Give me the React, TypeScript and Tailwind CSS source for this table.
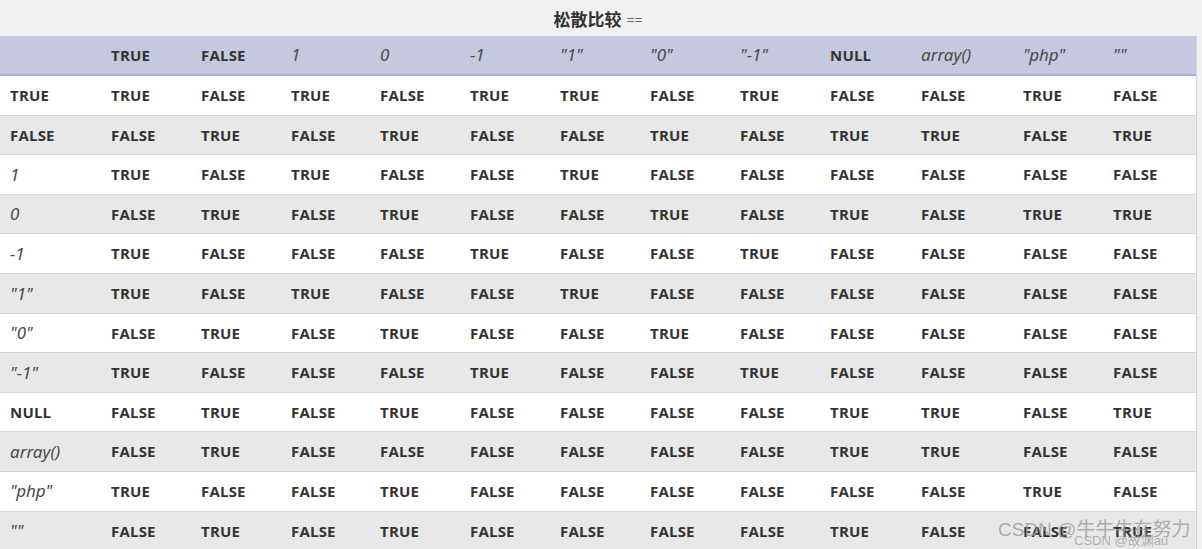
import React from 'react';

type Label = { text: string; italic: boolean };

const LABELS: Label[] = [
  { text: 'TRUE', italic: false },
  { text: 'FALSE', italic: false },
  { text: '1', italic: true },
  { text: '0', italic: true },
  { text: '-1', italic: true },
  { text: '"1"', italic: true },
  { text: '"0"', italic: true },
  { text: '"-1"', italic: true },
  { text: 'NULL', italic: false },
  { text: 'array()', italic: true },
  { text: '"php"', italic: true },
  { text: '""', italic: true },
];

const T = 'TRUE';
const F = 'FALSE';

const ROWS: string[][] = [
  [T, F, T, F, T, T, F, T, F, F, T, F],
  [F, T, F, T, F, F, T, F, T, T, F, T],
  [T, F, T, F, F, T, F, F, F, F, F, F],
  [F, T, F, T, F, F, T, F, T, F, T, T],
  [T, F, F, F, T, F, F, T, F, F, F, F],
  [T, F, T, F, F, T, F, F, F, F, F, F],
  [F, T, F, T, F, F, T, F, F, F, F, F],
  [T, F, F, F, T, F, F, T, F, F, F, F],
  [F, T, F, T, F, F, F, F, T, T, F, T],
  [F, T, F, F, F, F, F, F, T, T, F, F],
  [T, F, F, T, F, F, F, F, F, F, T, F],
  [F, T, F, T, F, F, F, F, T, F, F, T],
];

const GRID =
  'grid grid-cols-[101px_90px_90px_89px_90px_90px_90px_90px_90px_91px_102px_90px_93px]';

const LabelCell: React.FC<{ label: Label }> = ({ label }) => (
  <div
    className={`flex items-center pl-[10px] ${
      label.italic
        ? 'italic font-normal text-[17px] text-[#4a4a4a] font-["Noto_Sans",sans-serif]'
        : 'font-bold text-[15px] text-[#333] tracking-[0.2px]'
    }`}
  >
    {label.text}
  </div>
);

export default function App() {
  return (
    <div className="relative w-[1202px] h-[549px] overflow-hidden bg-[#f1f1f1] font-['Open_Sans','Noto_Sans_CJK_SC',sans-serif]">
      {/* Title */}
      <div className="h-[36px] w-[1196px] flex items-center justify-center gap-[5px] pt-[2px]">
        <span className="text-[17px] font-bold text-[#333] font-['Noto_Sans_CJK_SC',sans-serif]">松散比较</span>
        <span className="text-[14px] text-[#666]">==</span>
      </div>

      <div className="w-[1197px] border-r border-[#d4d4d4]">
        {/* Header */}
        <div className={`${GRID} h-[40px] bg-[#c5c8df] border-b-2 border-[#a9add0]`}>
          <div />
          {LABELS.map((l, i) => (
            <LabelCell key={i} label={l} />
          ))}
        </div>

        {/* Body */}
        {ROWS.map((row, r) => (
          <div
            key={r}
            className={`${GRID} h-[39.6px] border-b border-[#d6d6d6] ${r % 2 === 0 ? 'bg-white' : 'bg-[#e8e8e8]'}`}
          >
            <LabelCell label={LABELS[r]} />
            {row.map((v, c) => (
              <div key={c} className="flex items-center pl-[10px] text-[15px] font-bold text-[#333] tracking-[0.2px]">
                {v}
              </div>
            ))}
          </div>
        ))}
      </div>

      {/* Watermark */}
      <div className="absolute left-[998px] top-[516px] text-[19px] text-[#9a9a9a]/80 whitespace-nowrap font-['Liberation_Sans','Noto_Sans_CJK_SC',sans-serif]">
        CSDN @牛牛牛在努力
      </div>
      <div className="absolute left-[1074px] top-[531px] text-[13px] text-[#a0a0a0]/80 whitespace-nowrap font-['Liberation_Sans','Noto_Sans_CJK_SC',sans-serif]">
        CSDN @故渊au
      </div>
    </div>
  );
}
